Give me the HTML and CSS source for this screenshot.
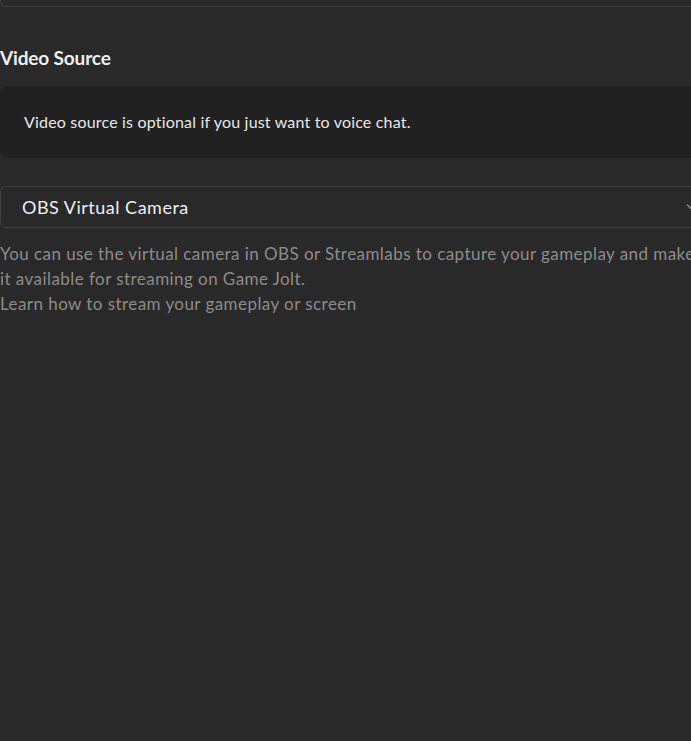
FILE: index.html
```html
<!DOCTYPE html>
<html lang="en">

<head>
    <meta charset="UTF-8">
    <meta name="viewport" content="width=device-width, initial-scale=1.0">
    <link rel="stylesheet" href="styles.css">
    <title>Stream settings</title>
</head>

<body>
    <div class="settings">
        <div class="prev-box"></div>

        <h3 class="section-heading">Video Source</h3>

        <div class="alert">
            Video source is optional if you just want to voice chat.
        </div>

        <div class="select">
            <span class="select-value">OBS Virtual Camera</span>
            <svg class="select-caret" width="12" height="8" viewBox="0 0 12 8">
                <path d="M1 1.5 L6 6.5 L11 1.5" fill="none" stroke="#8a8a8a" stroke-width="1.5" />
            </svg>
        </div>

        <p class="help">
            You can use the virtual camera in OBS or Streamlabs to capture your gameplay and make
            it available for streaming on Game Jolt.<br>
            <a class="help-link" href="#">Learn how to stream your gameplay or screen</a>
        </p>
    </div>
</body>

</html>
```

FILE: styles.css
```css
body {
    margin: 0;
    padding: 0;
    background-color: #292929;
    overflow: hidden;
    font-family: Lato, "Noto Sans", sans-serif;
}

.settings {
    width: 702px;
}

.prev-box {
    height: 40px;
    margin-top: -35px;
    border: 1px solid #404040;
    border-radius: 6px;
}

.section-heading {
    margin: 39px 0 0;
    font-size: 19px;
    line-height: 24px;
    font-weight: 700;
    letter-spacing: -0.15px;
    color: #efefef;
}

.alert {
    margin-top: 16px;
    padding: 24px 24px;
    height: 24px;
    line-height: 24px;
    background-color: #212121;
    border-radius: 8px;
    font-size: 16px;
    letter-spacing: 0.18px;
    color: #e8e8e8;
}

.select {
    display: flex;
    justify-content: space-between;
    align-items: center;
    margin-top: 28px;
    height: 40px;
    padding: 0 3px 0 21px;
    border: 1px solid #414141;
    border-radius: 6px;
}

.select-value {
    font-size: 18px;
    letter-spacing: 0.5px;
    color: #efefef;
}

.help {
    margin: 13px 0 0;
    font-size: 17px;
    line-height: 25px;
    letter-spacing: 0.44px;
    color: #8c8c8c;
}

.help-link {
    color: #8c8c8c;
    text-decoration: none;
}
```
